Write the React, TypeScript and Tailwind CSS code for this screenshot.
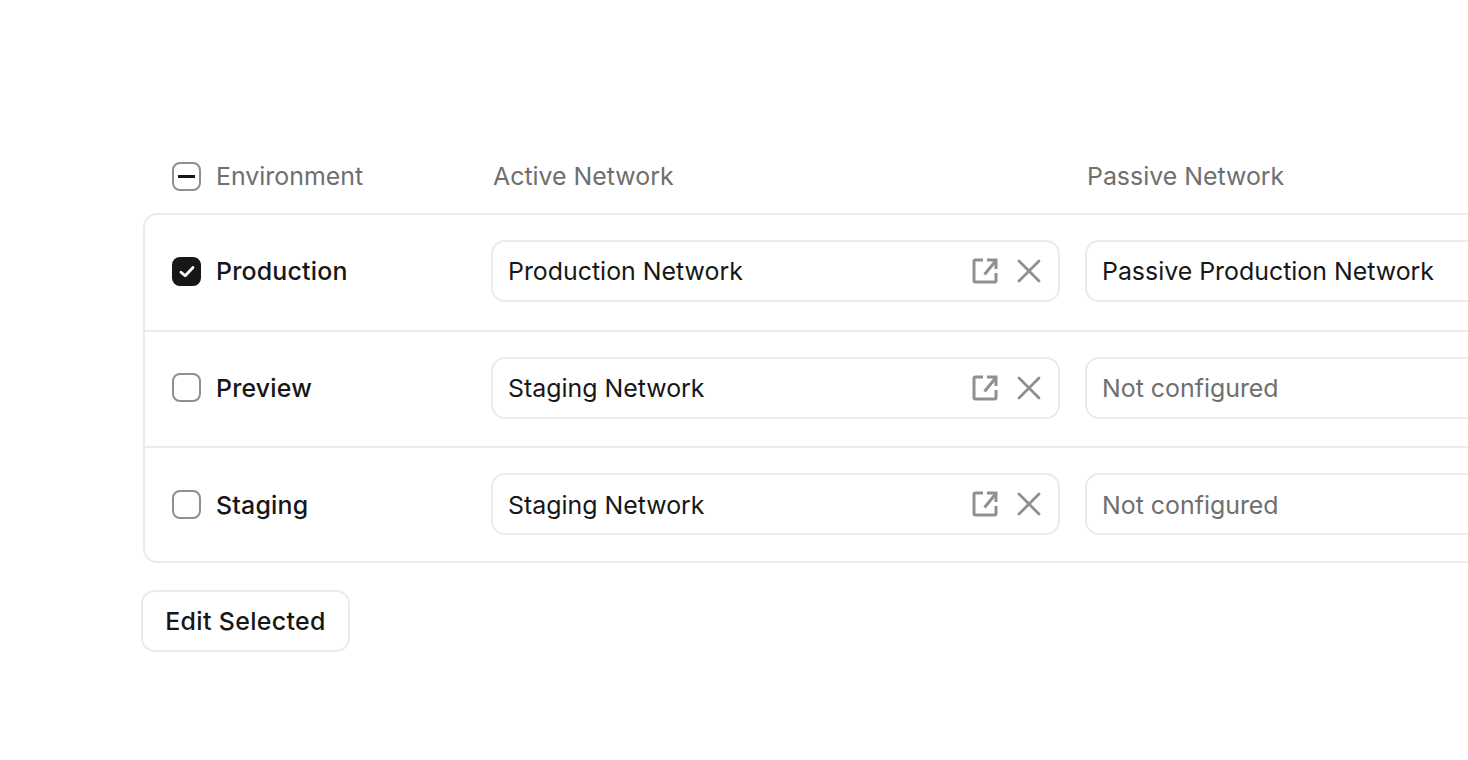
import type { ReactNode } from 'react';

const rows = [
  { name: 'Production', active: 'Production Network', passive: 'Passive Production Network', checked: true },
  { name: 'Preview', active: 'Staging Network', passive: null, checked: false },
  { name: 'Staging', active: 'Staging Network', passive: null, checked: false },
];

function ExternalIcon() {
  return (
    <svg width="26" height="26" viewBox="0 0 26 26" fill="none" stroke="#8f8f8f" strokeWidth="3">
      <path d="M11 2H3.500A1.500 1.500 0 0 0 2 3.500v19A1.500 1.500 0 0 0 3.500 24h19a1.500 1.500 0 0 0 1.500-1.500V15" />
      <path d="M12.500 16.500L24 2.500M15 2h9v9" />
    </svg>
  );
}

function CloseIcon() {
  return (
    <svg width="24" height="24" viewBox="0 0 24 24" fill="none" stroke="#8f8f8f" strokeWidth="2.8" strokeLinecap="round">
      <path d="M2 2l20 20M22 2L2 22" />
    </svg>
  );
}

function Field({ children, muted, actions }: { children: ReactNode; muted?: boolean; actions?: boolean }) {
  return (
    <div className="flex h-[62px] items-center justify-between rounded-[14px] border-2 border-[#ebebeb] bg-white pl-[15px] pr-[17px]">
      <span className={`pt-[2px] ${muted ? 'text-[#6f6f6f]' : 'text-[#171717]'}`}>{children}</span>
      {actions && (
        <div className="flex items-center gap-[19px]">
          <ExternalIcon />
          <CloseIcon />
        </div>
      )}
    </div>
  );
}

export default function App() {
  return (
    <div className="h-[760px] w-[1468px] overflow-hidden bg-white pl-[143px] pt-[162px] font-['Inter',sans-serif] text-[24.9px]">
      <div className="w-[1600px]">
        <div className="flex h-[29px] items-center pl-[29px] leading-[29px] text-[#6f6f6f]">
          <span className="flex h-[29px] w-[29px] items-center justify-center rounded-[8px] border-2 border-[#8f8f8f]">
            <span className="h-[3px] w-[17px] bg-[#171717]" />
          </span>
          <span className="ml-[15px] w-[277px]">Environment</span>
          <span className="w-[594px]">Active Network</span>
          <span>Passive Network</span>
        </div>

        <div className="mt-[22px] rounded-[14px] border-2 border-[#ebebeb]">
          {rows.map((row, i) => (
            <div
              key={row.name}
              className={`flex items-center pl-[27px] pt-[25px] ${
                i < rows.length - 1 ? 'border-b-2 border-[#ebebeb] pb-[27.67px]' : 'pb-[26px]'
              }`}
            >
              <span
                className={`flex h-[29px] w-[29px] shrink-0 items-center justify-center rounded-[8px] border-2 ${
                  row.checked ? 'border-[#171717] bg-[#171717]' : 'border-[#8f8f8f] bg-white'
                }`}
              >
                {row.checked && (
                  <svg width="16" height="14" viewBox="0 0 16 14" fill="none" stroke="#ffffff" strokeWidth="2.8" strokeLinecap="round" strokeLinejoin="round">
                    <path d="M2 8.200L6.200 11.800L14 3.500" />
                  </svg>
                )}
              </span>
              <span className="ml-[15px] w-[275px] pt-[2px] font-medium tracking-[0.2px] text-[#171717]">{row.name}</span>
              <div className="w-[569px]">
                <Field actions>{row.active}</Field>
              </div>
              <div className="ml-[25px] w-[569px]">
                <Field muted={!row.passive}>{row.passive ?? 'Not configured'}</Field>
              </div>
            </div>
          ))}
        </div>

        <button className="-ml-[2px] mt-[27px] flex h-[62px] w-[209px] items-center justify-center rounded-[14px] border-2 border-[#ebebeb] bg-white font-medium tracking-[0.35px] text-[#171717]">
          Edit Selected
        </button>
      </div>
    </div>
  );
}
